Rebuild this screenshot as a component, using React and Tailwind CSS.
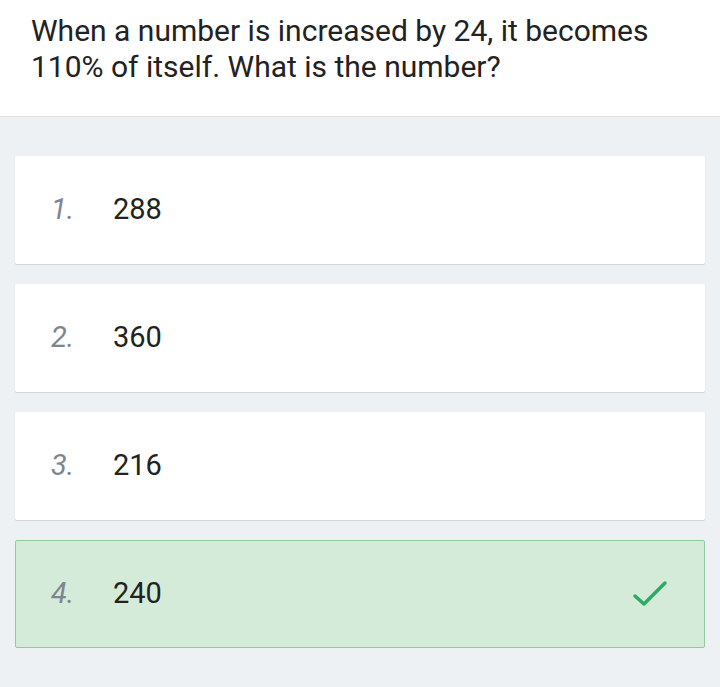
import React from 'react';

const OPTIONS = [
  { n: 1, value: '288' },
  { n: 2, value: '360' },
  { n: 3, value: '216' },
  { n: 4, value: '240', correct: true },
];

export default function App() {
  return (
    <div className="min-h-[687px] bg-[#eef1f3] font-['Roboto',sans-serif]">
      <div className="bg-white border-b border-[#dfe3e6] px-[31px] pt-[13px] h-[117px]">
        <p className="text-[30px] leading-[36px] text-[#222]">
          When a number is increased by 24, it becomes 110% of itself. What is the number?
        </p>
      </div>

      <div className="px-[15px] pt-[39px] flex flex-col gap-[20px]">
        {OPTIONS.map((o) => (
          <div
            key={o.n}
            className={`h-[108px] flex items-center rounded-[2px] ${o.correct ? 'bg-[#d5ebda] border border-[#93c99e]' : 'bg-white shadow-[0_1px_1px_rgba(0,0,0,0.12)]'}`}
          >
            <span className={`text-[29px] italic text-[#7d8590] ${o.correct ? 'pl-[35px] w-[97px]' : 'pl-[36px] w-[98px]'}`}>{o.n}.</span>
            <span className="text-[29px] text-[#222] flex-1">{o.value}</span>
            {o.correct && (
              <svg className="mr-[36px]" width="36" height="30" viewBox="0 0 36 30" fill="none">
                <path d="M3 17 L12 25 L33 4" stroke="#2faa62" strokeWidth="3.5" strokeLinecap="round" strokeLinejoin="round" />
              </svg>
            )}
          </div>
        ))}
      </div>
    </div>
  );
}
